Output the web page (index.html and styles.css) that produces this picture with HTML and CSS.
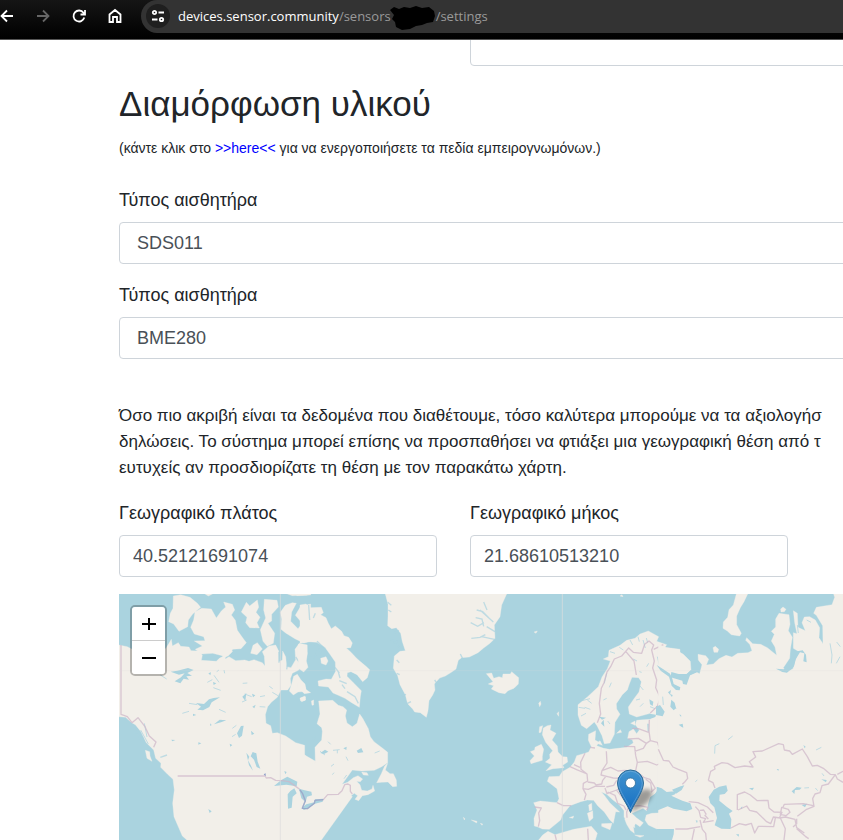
FILE: index.html
```html
<!DOCTYPE html>
<html lang="el">
<head>
<meta charset="utf-8">
<title>Sensor settings</title>
<link rel="stylesheet" href="styles.css">
</head>
<body>
<header class="browser-bar">
  <nav class="nav-buttons" aria-label="Browser">
    <button type="button" aria-label="Back"><svg viewBox="0 0 16 16"><path d="M13 8H2M7 2.500 1.500 8 7 13.500"/></svg></button>
    <button type="button" aria-label="Forward" disabled><svg viewBox="0 0 16 16"><path d="M1 8h11M7 2.500 12.500 8 7 13.500"/></svg></button>
    <button type="button" aria-label="Reload"><svg viewBox="0 0 16 16"><path d="M12.300 9.500A5.500 5.500 0 1 1 11.500 4.800L13 6.300M13 2v4.500H8.500"/></svg></button>
    <button type="button" aria-label="Home"><svg viewBox="0 0 16 16"><path d="M1.500 14V6.500L7 2l5.500 4.500V14H9V9H5v5z"/></svg></button>
  </nav>
  <div class="address">
    <button type="button" class="site-info" aria-label="Site information"><svg viewBox="0 0 16 16"><circle cx="4.500" cy="4.500" r="1.700"/><path d="M8.500 4.500H14M2 11.500h5.500"/><circle cx="11.500" cy="11.500" r="1.700"/></svg></button>
    <div class="url"><span class="host">devices.sensor.community</span><span>/sensors</span><svg class="scribble" viewBox="0 0 48 24"><path d="M1 4 5 1l5 2 5-2 6 1 6-2 6 2 7-1 5 4 1 5-2 6-6 1-5 2-6 1-6 3-8 1-6-3-1-5-3-3 2-4z"/></svg><span>/settings</span></div>
  </div>
</header>

<main class="page">
  <form class="settings">
    <div class="columns top-row">
      <input class="control clipped" type="text" aria-label="Όνομα">
    </div>
    <h2>Διαμόρφωση υλικού</h2>
    <p class="hint">(κάντε κλικ στο <a href="#expert">&gt;&gt;here&lt;&lt;</a> για να ενεργοποιήσετε τα πεδία εμπειρογνωμόνων.)</p>
    <div class="field">
      <label for="type1">Τύπος αισθητήρα</label>
      <select class="control" id="type1"><option>SDS011</option></select>
    </div>
    <div class="field">
      <label for="type2">Τύπος αισθητήρα</label>
      <select class="control" id="type2"><option>BME280</option></select>
    </div>
    <p class="intro">Όσο πιο ακριβή είναι τα δεδομένα που διαθέτουμε, τόσο καλύτερα μπορούμε να τα αξιολογήσ<br>δηλώσεις. Το σύστημα μπορεί επίσης να προσπαθήσει να φτιάξει μια γεωγραφική θέση από τ<br>ευτυχείς αν προσδιορίζατε τη θέση με τον παρακάτω χάρτη.</p>
    <div class="columns">
      <div class="field">
        <label for="lat">Γεωγραφικό πλάτος</label>
        <input class="control" id="lat" type="text" value="40.52121691074">
      </div>
      <div class="field">
        <label for="lng">Γεωγραφικό μήκος</label>
        <input class="control" id="lng" type="text" value="21.68610513210">
      </div>
    </div>

    <div class="map">
      <svg class="tiles" viewBox="0 0 2172 738" aria-hidden="true">
        <!-- North America -->
        <g transform="translate(0 -12)">
          <path class="land" d="M0 165 25 170 45 181 100 178 140 176 150 160 157 148 160 168 178 158 185 169 210 171 216 182 240 183 250 196 247 211 292 214 301 205 318 196 319 207 330 200 350 212 377 210 390 214 405 209 430 218 438 228 436 199 430 185 450 168 470 165 479 183 480 215 490 210 491 183 500 200 503 230 516 233 530 209 528 178 541 160 566 165 564 193 557 219 538 241 520 250 514 266 516 286 506 300 486 300 475 322 457 337 446 350 439 374 441 400 455 407 460 430 475 428 500 438 530 458 557 466 557 495 600 520 700 620 600 760H215L190 738 180 715 165 680 161 640 166 600 162 568 145 552 125 532 126 520 110 505 104 480 82 458 66 425 49 404 38 398 20 382 0 380Z"/>
          <path class="land" d="M163 18 185 14 213 22 235 40 245 52 221 72 208 90 206 110 180 124 164 102 149 95 154 70 162 55ZM228 66 248 55 277 57 292 84 307 63 320 51 314 36 340 43 347 60 337 75 349 91 355 121 372 145 382 158 366 176 341 178 335 190 310 197 281 190 247 192 229 178 250 168 226 153 258 152 254 140 226 132 215 112 224 90ZM255 10 284 10 268 18ZM367 66 382 37 392 48 415 30 419 52 411 67 423 82 414 98 421 114 392 113 380 98 384 82ZM436 28 474 31 478 51 458 73 458 93 447 100 467 130 463 160 445 169 432 154 424 119 440 84 434 60ZM499 46 520 38 532 40 518 66 515 94 537 116 550 100 529 76 545 49 575 42 575 154 555 159 529 147 500 129 486 118 488 87 484 67ZM402 166 415 158 430 177 414 194 395 190ZM500 10 575 10 575 15 545 16 520 17ZM524 259 535 253 546 270 558 282 562 304 537 306 523 315 511 303 518 282ZM544 325 557 318 560 330 548 335ZM308 194 320 187 341 184 328 197 315 204ZM79 481 92 485 93 498 99 514 84 505Z"/>
          <path class="lake" d="M155 245 175 242 187 239 207 234 224 240 205 249 219 257 202 259 210 269 194 266 184 280 167 274 186 262 197 250 180 254ZM231 339 255 342 270 328 284 324 303 322 278 337 271 351 252 361 235 359 246 350ZM285 403 302 389 322 391 306 397ZM382 488 391 500 387 511 396 527 402 542 390 526ZM401 486 412 490 416 515 424 536 413 531 405 509 395 499ZM354 430 366 408 374 407 369 437 360 444ZM465 588 487 570 505 560 535 575 533 589 502 584ZM506 613 514 603 526 595 533 610 521 620 518 653 507 656ZM268 657 278 664 272 669ZM496 543 503 546 499 553ZM370 320 382 309 379 333ZM399 311 409 316 402 322ZM222 371 232 375 222 378ZM273 400 278 405 274 408ZM238 457 247 460 238 464ZM157 449 169 450 160 454ZM282 276 292 280 284 285ZM400 350 410 344 406 355ZM396 422 406 431 398 435ZM332 461 340 465 334 470ZM268 250 276 247 274 256Z"/>
          <path class="lake-line" d="M49 411 62 450M65 420 88 462M76 400 84 441M45 428 74 445M124 255 143 267M285 256 300 277M265 277 280 269M283 293 305 301M315 240 317 250M371 280 385 279M377 312 398 320M369 336 383 330M423 320 438 317M190 370 210 364M210 340 235 344M300 358 320 367M340 415 352 406M460 307 477 317M451 289 461 296M339 440 350 433M300 240 293 245M422 350 439 351"/>
          <path class="border" d="M6 165V373L25 380 39 398 57 383 78 410 91 438 111 456 104 472M176 558H438L442 564 455 563 470 571 490 572 510 575 530 589 548 602"/>
          <path class="coast-line" d="M480 186 480 218M510 198 503 238M530 201 541 217M124 502 144 495"/>
          <path class="lake-deep" d="M434 554 439 549 441 558Z"/>
        </g>
        <!-- Eastern Canada and Greenland -->
        <g transform="translate(543 -12)">
          <path class="land" d="M0 45 18 42 30 53 64 52 70 68 62 74 78 83 85 100 94 116 106 108 125 124 132 137 146 142 157 159 152 173 139 174 153 187 169 204 180 214 198 229 209 239 202 263 188 275 171 254 153 245 142 248 141 259 161 279 184 302 181 320 178 352 155 338 135 325 115 316 99 309 85 291 56 288 54 273 78 267 94 268 107 244 106 216 92 196 75 172 50 157 25 155 0 160ZM-10 12H32L20 16-10 17ZM62 205 78 200 84 213 78 225 64 220ZM-5 162 18 170 22 190 19 213 24 232 11 246-5 235ZM-5 278 14 285 17 298 32 308 13 311-5 293ZM0 324 17 320 15 331 2 333ZM34 333 41 330 41 345 36 346ZM56 333 98 331 115 346 129 350 140 360 136 378 141 399 157 410 171 400 179 372 188 385 205 416 211 440 222 455 248 475 263 487 263 518 245 530 223 541 185 543 157 540 142 561 126 583 143 577 160 563 174 557 188 567 181 575 170 574 180 584 185 601 202 603 216 597 219 586 224 603 204 614 187 617 176 632 165 628 173 617 163 610 141 626 124 636 124 652 102 663 92 672 78 687 84 700 75 711 75 728 51 750H0V495L14 494 35 525 46 516 45 472 65 450 67 424 65 413 51 401 60 372ZM185 546 201 548 205 556 190 555ZM230 578 244 551 254 528 263 520 256 540 270 551 280 551 289 570 290 589 278 590 264 576 244 577Z"/>
          <path class="land" d="M256 12 264 43 264 78 263 107 275 116 289 113 302 130 307 155 316 182 300 184 283 198 280 235 293 257 300 284 316 314 323 341 338 357 344 366 361 368 379 382 384 362 387 332 398 315 405 300 403 282 419 264 436 258 454 247 468 237 475 211 485 203 508 201 534 188 551 174 570 160 585 145 583 105 600 80 605 45 620 12Z"/>
          <path class="coast-line" d="M263 37 274 46M265 60 274 66M282 157 298 170M271 148 292 155M280 130 297 121M290 210 298 218M290 250 299 254M306 318 318 313M321 341 333 335M481 192 488 206M404 270 411 280M512 98 533 109 552 98M514 145 540 142 556 134M527 83 546 87 551 109M530 60 548 65 567 84M551 36 561 60M540 60 580 96M545 140 583 148M560 110 585 125M26 45 29 90M46 70 40 84M51 154 70 172M56 177 65 190M41 185 48 199M105 232 118 249M115 246 120 264M118 272 140 281M126 284 135 296M141 305 165 320 175 340"/>
          <path class="lake" d="M22 160 52 168 42 206 25 196ZM-3 596 14 601 34 605 36 616 21 620 17 637 4 625ZM5 654 19 643 43 637 45 628 70 626 68 635 45 641 30 651 12 660ZM170 482 184 474 190 487 174 489ZM61 489 75 479 85 485 72 492ZM130 475 140 470 139 480ZM35 445 47 440 41 457Z"/>
          <path class="lake-line" d="M99 481 119 479M84 455 92 463M224 489 239 483M138 500 144 512M93 529 102 522M102 548 97 554M140 555 132 566M112 480 112 490M60 484 75 495"/>
          <path class="border" d="M0 600 6 609 16 632 7 655 22 656 43 640 45 631 70 629 83 614 115 613 126 602 134 584 144 582 151 586 151 604 157 612"/>
          <path class="water-border" d="M0 600 8 611 16 632 7 655 22 656 43 640 45 631 70 629"/>
          <path class="land" d="M490 682 495 686 493 690ZM514 690 531 694 530 699ZM541 700 548 702 546 706Z"/>
        </g>
        <!-- Europe -->
        <g transform="translate(1083 -12)">
          <path class="land" d="M19 251 35 249 41 265 57 260 67 263 69 252 91 252 95 245 116 263 115 282 102 295 84 302 75 311 57 308 34 297 41 287 25 282 39 275ZM190 414 202 407 213 405 210 420 228 430 216 450 232 468 234 486 248 500 261 501 263 516 248 526 252 533 219 536 198 542 215 524 196 516 210 505 209 493 218 482 208 470 197 457 187 434ZM165 472 184 463 191 478 187 499 187 511 153 521 150 512 163 498 151 485 164 480ZM179 410 188 407 183 427 177 428ZM176 340 181 334 183 342 179 350ZM231 371 236 365 236 379ZM162 126 172 123 168 130Z"/>
          <path class="land" d="M370 207 385 200 387 181 420 166 440 151 465 145 480 132 505 123 536 140 530 154 560 164 555 172 600 178 600 590 570 590 554 603 538 594 525 612 512 620 505 638 500 662 489 655 455 670 459 691 465 713 445 700 432 681 432 662 418 644 399 630 380 613 364 606 374 617 390 639 419 666 407 665 400 700 389 689 373 666 353 647 341 631 322 630 302 635 270 647 247 676 242 690 208 718 187 717 174 711 163 708 162 685 171 660 161 638 181 633 231 638 237 626 231 596 202 574 207 560 238 559 247 545 270 532 283 516 290 497 315 490 326 486 334 470 325 451 326 433 347 422 345 450 357 457 350 467 371 475 388 478 440 472 460 459 457 449 443 445 447 425 460 417 470 431 478 420 466 404 470 391 489 389 511 388 511 370 470 381 448 372 445 351 462 326 477 306 484 275 476 263 456 262 448 282 442 300 427 314 409 341 410 357 420 373 405 397 403 433 390 459 373 461 366 437 351 407 343 396 320 416 304 406 294 375 294 344 323 320 355 290 366 261 382 236 391 213Z"/>
          <path class="land" d="M326 645 335 640 336 660 328 663ZM322 670 338 662 339 684 328 694ZM365 701 396 700 390 719 365 709ZM268 683 281 678 279 685ZM350 460 360 452 367 466ZM410 430 421 419 425 427ZM452 400 465 393 465 406ZM452 667 470 684 490 698 480 710 467 701 460 710 463 730 451 721 440 703 434 687ZM499 675 515 670 550 668 600 672 600 720 545 724 505 705 495 690ZM464 735 492 737 480 742ZM188 735 204 724 225 734 281 718 334 709 352 730 346 750H176ZM420 18 426 14 429 20Z"/>
          <path class="lake" d="M600 590 563 605 540 592 525 611 510 623 503 656 540 655 600 658ZM363 400 371 389 373 410ZM357 380 378 383 366 389ZM528 349 550 348 555 370 541 379 528 363ZM502 401 506 401 506 425 503 424ZM508 328 520 335 518 348 510 343ZM508 371 528 374 526 381 508 388Z"/>
          <path class="lake-line" d="M489 150 496 174M499 144 503 158M537 170 542 205M558 180 566 218M545 231 554 253M506 220 500 230M460 207 471 213M478 245 485 247M480 288 490 300M380 250 373 280M394 278 388 292M370 330 380 325M468 330 480 327M480 350 490 340M322 330 335 340M305 332 330 326M296 352 315 355M303 378 318 370M314 352 331 358M383 393 390 402M532 200 538 226M550 240 570 266M510 350 525 356M390 185 405 190M418 172 430 180M450 150 458 165M474 140 478 155"/>
          <path class="border" d="M352 398 362 372 358 340 364 295 372 278 381 246 392 230 403 207 425 198 437 184 462 213 469 255M437 184 446 174 460 187 485 190 494 163 507 153 521 165 515 180 523 213 518 234 530 270 527 293 541 323 532 349 511 369M508 390 507 424 511 452M521 178 550 164M445 447 475 445 499 460 511 452 532 457 543 487 550 499 547 518M457 415 475 416 506 427M432 469 464 470 467 497 472 517 467 542M464 484 490 475 499 460M472 517 502 514 530 525 547 518 570 512M331 472 345 474M379 484 381 519 366 542 392 532 414 543 433 541 464 544M366 542 363 555 383 560 400 564 440 566M315 490 302 517 303 538 321 552 323 573 310 580 309 596 318 613 313 630M270 530 290 539 321 552M282 524 300 532M323 576 343 579 348 585 365 582 368 571 377 560M309 596 325 598 345 589 375 589M375 594 381 611 410 600 429 588M379 591 401 586 410 571M383 606 405 616 413 640 432 648 438 660M410 601 430 626 447 649 440 666 441 683M447 649 479 647 504 652 500 661M231 638 250 647 274 647M164 651 184 654 176 669 179 692 175 710M467 542 493 563 510 568 526 595 513 607M497 568 512 579 516 603M229 750 225 734M325 750 323 716"/>
        </g>
        <!-- Russia and Central Asia -->
        <g transform="translate(1623 -12)">
          <path class="land" d="M-5 161 20 175 45 178 70 193 91 214 93 240 80 252 56 252 35 246 32 260 51 266 75 272 90 256 108 246 119 251 126 224 115 210 114 193 137 197 146 208 139 225 160 222 177 206 198 196 216 201 233 190 264 188 276 182 269 163 257 151 260 143 278 161 302 163 322 173 350 196 345 171 334 153 343 133 334 124 347 111 347 87 357 70 387 74 390 103 385 122 397 142 391 178 389 205 370 233 380 247 399 236 407 209 417 185 400 175 400 142 400 128 411 131 404 98 400 62 412 70 414 112 436 122 426 98 433 81 449 80 466 90 479 113 477 143 489 161 488 107 469 76 461 70 469 52 516 44 524 22 521 12 570 12 570 750 10 750-5 720Z"/>
          <path class="land" d="M229 12 263 12 252 35 241 53 230 78 230 104 244 130 239 138 214 134 202 123 189 115 190 96 203 82 207 59 220 45ZM159 173 166 169 176 178 173 187 162 187ZM362 57 369 51 378 58 373 65 363 66Z"/>
          <path class="lake" d="M-10 225 10 238 30 251 37 266 41 282 61 292 59 301 48 300 35 287 27 260 2 242ZM34 246 56 252 80 252 93 240 119 240 108 248 90 256 80 284 69 282 67 272 32 262ZM34 329 44 338 48 355 41 361 31 350ZM28 311 38 315 36 321ZM24 307 33 300 30 314ZM-12 350 0 345 14 365 8 379-12 375ZM59 372 65 379 60 379ZM56 404 68 401 70 413 64 410ZM348 236 371 238 391 228 401 206 412 184 428 181 438 194 440 217 430 214 433 190 420 187 407 208 402 229 381 248 367 246ZM178 590 199 586 203 602 194 612 179 614 178 632 190 642 201 651 218 663 207 671 214 688 212 717 184 716 164 706 171 684 163 652 151 640 146 621 161 599ZM-10 590 5 595 20 606 49 603 45 613 34 617 67 632 91 640 97 657 80 664 40 656 23 649-10 662ZM36 599 62 589 73 586 65 600 48 611ZM-10 717 42 717 41 733 36 750H-10ZM395 604 410 591 425 593 419 599 405 600 403 612ZM425 645 441 641 435 652ZM267 595 282 593 277 601ZM241 655 247 649 246 657ZM484 568 500 570 498 577ZM430 465 437 470 434 475ZM350 537 356 537 355 543ZM228 733 237 733 236 740ZM107 691 113 692 111 700Z"/>
          <path class="lake-line" d="M433 594 447 593M466 594 473 602M178 461 165 467 164 491M204 449 218 438M468 480 484 472M106 575 112 570M477 100 486 111M416 74 424 92M440 90 453 97M510 160 516 195 514 220M529 220 540 200M486 550 492 558M412 105 415 129M447 68 451 76M530 156 541 170M8 320 10 345M39 342 48 356"/>
          <path class="border" d="M-5 478 10 511 27 513 39 531 55 538 80 548 83 565 74 576 67 583M145 571 152 544 165 537 163 529 186 518 203 520 225 533 254 528 279 531 268 515 287 501 279 485 307 483 356 461 370 464 373 480 389 483 397 493 427 477 442 500 457 528 472 526 490 535 511 553 526 554 532 567 549 577M532 553 549 544M145 571 159 578 165 594M526 554 505 582 486 587 480 608 465 612 458 626 462 649 440 658 412 679M232 660V614L254 606 271 615 292 632 324 631 327 654 342 666 366 667 358 684 376 681 405 688 410 713 433 729M234 660 247 654 260 648 269 661 290 666 320 695 332 701 340 681 360 684M346 684 341 710 295 709 284 729 274 700 257 705 238 701 213 714M368 654 373 643 430 641 460 647M365 652 385 658 390 667 378 677 361 673ZM361 684 376 716 372 750M399 711 410 701 410 686M410 716 436 739 446 746M86 635 114 638 142 651 160 668M106 650 117 662 122 682 137 686 130 697 161 692M120 661 131 660 139 674M46 717 81 717 121 710M96 750 103 717M120 690 127 718 137 730 139 750M134 675 145 687"/>
        </g>
        <path class="grid" d="M484 0V738M1330 0V738"/>
        <path class="grid faint" d="M0 230H2172"/>
      </svg>
      <div class="zoom">
        <button type="button" aria-label="Zoom in"><svg viewBox="0 0 14 14"><path d="M7 1v12M0 7h14"/></svg></button>
        <button type="button" aria-label="Zoom out"><svg viewBox="0 0 14 14"><path d="M0 7h14"/></svg></button>
      </div>
      <svg class="pin" viewBox="0 0 50 46" aria-hidden="true">
        <defs>
          <linearGradient id="pin-fill" x1="0" y1="0" x2="0" y2="1"><stop offset="0" stop-color="#4193cf"/><stop offset="1" stop-color="#146ec2"/></linearGradient>
          <filter id="soft" x="-30%" y="-30%" width="160%" height="160%"><feGaussianBlur stdDeviation="2"/></filter>
        </defs>
        <path d="M15 43 20 26C26 18 38 19 36 26C34 34 24 39 15 43Z" fill="#000" opacity=".35" filter="url(#soft)"/>
        <path d="M14.500 43.500C12 36 1.500 23 1.500 14A13 13 0 0 1 27.500 14C27.500 23 17 36 14.500 43.500Z" fill="url(#pin-fill)" stroke="#2e6c97"/>
        <path d="M14.500 40C12 33 2.700 22 2.700 14A11.800 11.800 0 0 1 26.300 14C26.300 22 17 33 14.500 40Z" fill="none" stroke="#fff" stroke-opacity=".2"/>
        <circle cx="14.500" cy="14" r="5" fill="#fff" stroke="#2e6c97" stroke-width=".8"/>
      </svg>
    </div>
  </form>
</main>
</body>
</html>
```
FILE: styles.css
```css
* { box-sizing: border-box; }

html { overflow: hidden; }

body {
  margin: 0;
  background: #fff;
  color: #212529;
  font-family: "Liberation Sans", Arial, sans-serif;
  font-size: 18px;
  line-height: 26px;
}

button { padding: 0; border: 0; background: none; }

.browser-bar {
  display: flex;
  align-items: flex-start;
  height: 40px;
  background: linear-gradient(#151515, #000);
  border-bottom: 1px solid #555;
}

.nav-buttons { display: flex; gap: 20px; width: 141px; padding-top: 8px; }

.nav-buttons button { flex: none; width: 16px; height: 16px; }
.nav-buttons svg, .site-info svg { display: block; width: 16px; height: 16px; fill: none; stroke: #fff; stroke-width: 1.8; }
.nav-buttons button:disabled svg { stroke: #666; }

.address {
  display: flex;
  flex: 1;
  align-items: center;
  gap: 8px;
  height: 33px;
  padding: 0 0 1px 5px;
  background: #333;
  border-radius: 0 0 0 16px / 0 0 0 17px;
  border-top-left-radius: 16px;
}

.site-info {
  display: grid;
  place-items: center;
  width: 24px;
  height: 24px;
  border-radius: 12px;
  background: #1f1f1f;
}

.url {
  display: flex;
  align-items: center;
  color: #9a9a9a;
  font-family: "Open Sans", "Noto Sans", sans-serif;
  font-size: 13px;
  line-height: 20px;
}

.host { color: #fff; }
.scribble { width: 48px; height: 24px; margin: 4px -1px 0 -2px; }

.page { padding-left: 119px; }
.settings { width: 100%; min-width: 1020px; }

.columns { display: grid; grid-template-columns: repeat(3, 1fr); gap: 33px; }
.columns .field { margin-bottom: 17px; }
.top-row { height: 26px; align-content: end; overflow: hidden; }
.clipped { grid-column: 2 / 4; }

h2 { margin: 17px 0 13px; font-size: 35px; font-weight: 400; line-height: 42px; }

.hint { margin: 0 0 29px; font-size: 14px; line-height: 20px; }
.hint a { color: #00f; text-decoration: none; }

.field { display: flex; flex-direction: column; gap: 9px; margin-bottom: 18px; }

.control {
  display: block;
  width: 100%;
  height: 42px;
  padding: 6px 13px;
  border: 1px solid #ced4da;
  border-radius: 4px;
  background: #fff;
  color: #495057;
  font-family: inherit;
  font-size: 18px;
  line-height: 26px;
}

select.control { appearance: none; padding-left: 17px; }

.intro { margin: 44px 0 19px; font-size: 17px; white-space: nowrap; }

.map { position: relative; overflow: hidden; height: 40vh; background: #aad3df; }
.tiles { display: block; width: 724px; height: auto; }

.land { fill: #f2efe9; stroke: #f2efe9; stroke-width: 2; stroke-opacity: .5; stroke-linejoin: round; }
.lake { fill: #aad3df; }
.lake-line, .coast-line { fill: none; stroke: #aad3df; stroke-width: 3; opacity: .7; }
.coast-line { stroke-width: 4; }
.lake-deep { fill: #8d9dc8; }
.border { fill: none; stroke: #cdb5c8; stroke-width: 4; stroke-linejoin: round; opacity: .7; }
.water-border { fill: none; stroke: #8fa6cb; stroke-width: 4; stroke-linejoin: round; opacity: .8; }
.grid { fill: none; stroke: #dddddd; stroke-width: 3; opacity: .7; }
.faint { opacity: .2; }

.zoom {
  position: absolute;
  top: 11px;
  left: 11px;
  border: 2px solid rgba(0, 0, 0, .25);
  border-radius: 5px;
  background-clip: padding-box;
}

.zoom button { display: grid; place-items: center; width: 33px; height: 33px; background: #fff; border-radius: 0 0 3px 3px; }
.zoom button:first-child { height: 34px; border-bottom: 1px solid #ccc; border-radius: 3px 3px 0 0; }
.zoom svg { width: 14px; height: 14px; stroke: #000; stroke-width: 2; }

.pin { position: absolute; top: 175px; left: 497px; width: 50px; height: 46px; }
```
